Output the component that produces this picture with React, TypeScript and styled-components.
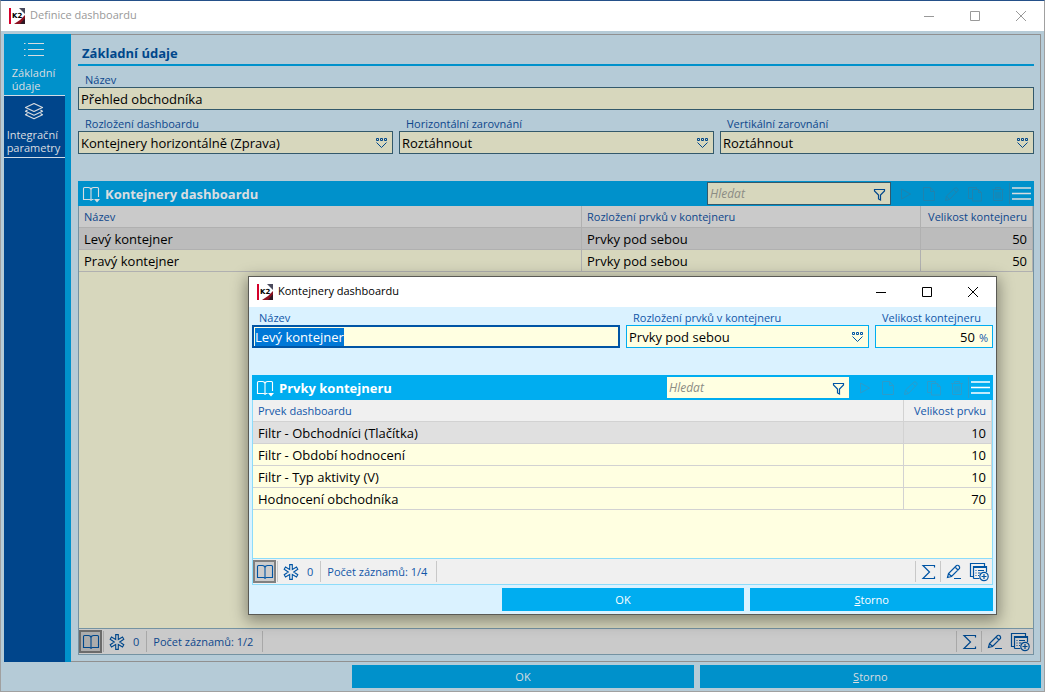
import React, { useEffect, useId, useRef } from 'react';
import styled, { createGlobalStyle, css, ThemeProvider } from 'styled-components';

interface Palette {
  accent: string;
  onAccent: string;
  surface: string;
  text: string;
  label: string;
  icon: string;
  field: string;
  fieldBorder: string;
  gridBorder: string;
  gridLine: string;
  gridHead: string;
  rowActive: string;
  disabledIcon: string;
  separator: string;
  toggle: string;
  toggleBorder: string;
  searchBorder: string;
  caption: string;
  control: string;
}

declare module 'styled-components' {
  export interface DefaultTheme extends Palette {}
}

const activePalette: Palette = {
  accent: '#00adf0',
  onAccent: '#ffffff',
  surface: '#daf2ff',
  text: '#000000',
  label: '#1156a8',
  icon: '#0055a5',
  field: '#ffffe1',
  fieldBorder: '#00adf0',
  gridBorder: '#8cdcfa',
  gridLine: '#d2d2d2',
  gridHead: '#f0f0f0',
  rowActive: '#e0e0e0',
  disabledIcon: '#2a9ccc',
  separator: '#c8c8c8',
  toggle: '#cccccc',
  toggleBorder: '#808080',
  searchBorder: '#00adf0',
  caption: '#000000',
  control: '#000000',
};

const dimmedPalette: Palette = {
  accent: '#0091cb',
  onAccent: '#d9dde0',
  surface: '#b5cbd7',
  text: '#000000',
  label: '#0d478c',
  icon: '#00478b',
  field: '#d7d7bd',
  fieldBorder: '#33596b',
  gridBorder: '#7492a2',
  gridLine: '#b0b0b0',
  gridHead: '#cacaca',
  rowActive: '#bcbcbc',
  disabledIcon: '#1f83ae',
  separator: '#a8a8a8',
  toggle: '#acacac',
  toggleBorder: '#6b6b6b',
  searchBorder: '#33596b',
  caption: '#999999',
  control: '#999999',
};

const GlobalStyle = createGlobalStyle`
  *, *::before, *::after { box-sizing: border-box; }
  body {
    margin: 0;
    font-family: "Open Sans", "Noto Sans", sans-serif;
    font-size: 13px;
    line-height: 17px;
  }
  button, input, select { font: inherit; margin: 0; padding: 0; border: 0; border-radius: 0; }
  button { background: none; cursor: pointer; }
`;

/* ---------- windows ---------- */

const AppWindow = styled.div`
  position: relative;
  display: flex;
  flex-direction: column;
  min-height: 100vh;
  border: 1px solid #a0a0a0;
  border-top-color: #245089;
  background: ${p => p.theme.surface};
`;

const DialogWindow = styled.section`
  position: absolute;
  top: 275px;
  left: 247px;
  right: 47px;
  display: flex;
  flex-direction: column;
  border: 1px solid #5a5a55;
  background: ${p => p.theme.surface};
  box-shadow: 0 4px 14px 2px rgba(0, 0, 0, 0.38);
`;

const TitleBar = styled.header`
  display: flex;
  align-items: center;
  height: 30px;
  padding-left: 8px;
  background: #fff;
`;

const Caption = styled.h1`
  flex: 1;
  margin: 0 0 0 5px;
  padding-bottom: 2px;
  font-size: 11px;
  font-weight: 400;
  line-height: 16px;
  color: ${p => p.theme.caption};
`;

const WindowButton = styled.button`
  display: flex;
  align-items: center;
  justify-content: center;
  width: 46px;
  height: 30px;
  color: ${p => p.theme.control};
`;

const Workspace = styled.div`
  flex: 1;
  display: flex;
  padding: 3px 3px 0;
`;

const Panel = styled.main`
  flex: 1;
  min-width: 0;
  display: flex;
  flex-direction: column;
  padding: 0 6px 6px 7px;
  border: 1px solid #909090;
  border-left: 0;
`;

const DialogBody = styled.div`
  display: flex;
  flex-direction: column;
  padding: 3px 3px 0;
`;

const Actions = styled.footer`
  display: grid;
  grid-template-columns: repeat(3, 1fr);
  gap: 6px;
  padding: 3px 3px 3px 4px;
`;

const ActionButton = styled.button<{ $first?: boolean }>`
  grid-column: ${p => (p.$first ? 2 : 'auto')};
  height: 23px;
  background: ${p => p.theme.accent};
  color: ${p => p.theme.onAccent};
  font-size: 11px;
  line-height: 16px;
`;

/* ---------- side navigation ---------- */

const Sidebar = styled.nav`
  flex: none;
  display: flex;
  flex-direction: column;
  width: 67px;
  padding-right: 6px;
  background: ${p => p.theme.accent};
`;

const SideTab = styled.button<{ $active?: boolean }>`
  display: flex;
  flex-direction: column;
  align-items: center;
  gap: 7px;
  height: 62px;
  padding: 5px 2px 0 0;
  border-bottom: 1px solid #d0dce6;
  background: ${p => (p.$active ? p.theme.accent : '#00458b')};
  color: ${p => p.theme.onAccent};
  font-size: 11px;
  line-height: 13px;
  text-align: left;
`;

const SideFill = styled.div`
  flex: 1;
  background: #00458b;
`;

/* ---------- form ---------- */

const SectionTitle = styled.h2`
  margin: 0;
  padding: 8px 4px 1px;
  border-bottom: 2px solid ${p => p.theme.accent};
  font-size: 13px;
  line-height: 20px;
  color: ${p => p.theme.icon};
`;

const FieldRow = styled.div<{ $columns?: string; $spaced?: boolean }>`
  display: grid;
  grid-template-columns: ${p => p.$columns ?? '1fr'};
  gap: 6px;
  padding-top: ${p => (p.$spaced ? '6px' : '0')};
`;

const FieldBlock = styled.div`
  display: flex;
  flex-direction: column;
  min-width: 0;
`;

const FieldLabel = styled.label`
  padding-left: 7px;
  font-size: 11px;
  line-height: 15px;
  white-space: nowrap;
  color: ${p => p.theme.label};
`;

const FieldBox = styled.div`
  position: relative;
  display: flex;
  align-items: center;
  height: 23px;
  padding: 1px 2px 0;
  border: 1px solid ${p => p.theme.fieldBorder};
  background: ${p => p.theme.field};

  &:has(input:focus) {
    padding: 1px 1px 0;
    border: 2px solid #0055a5;
  }
`;

const control = css`
  flex: 1;
  min-width: 0;
  width: 100%;
  height: 18px;
  background: transparent;
  color: ${p => p.theme.text};
  line-height: 18px;
  outline: none;
`;

const TextInput = styled.input<{ $numeric?: boolean }>`
  ${control}
  text-align: ${p => (p.$numeric ? 'right' : 'left')};

  &::selection {
    background: #0078d7;
    color: #fff;
  }
`;

const Unit = styled.span`
  margin: 0 2px 0 4px;
  font-size: 11px;
  color: ${p => p.theme.label};
`;

const SelectInput = styled.select`
  ${control}
  appearance: none;
`;

const SelectMark = styled.svg`
  position: absolute;
  right: 4px;
  top: 5px;
  pointer-events: none;
  color: ${p => p.theme.icon};
`;

/* ---------- data grid ---------- */

const GridFrame = styled.section`
  flex: 1;
  display: flex;
  flex-direction: column;
  margin-top: 27px;
`;

const GridBar = styled.div`
  display: flex;
  align-items: center;
  height: 25px;
  padding: 0 3px 0 4px;
  background: ${p => p.theme.accent};
  color: ${p => p.theme.onAccent};
`;

const GridTitle = styled.h3`
  flex: 1;
  margin: 0 0 0 5px;
  font-size: 13px;
  line-height: 18px;
`;

const SearchBox = styled.div`
  display: flex;
  align-items: center;
  width: 184px;
  height: 23px;
  margin-right: 3px;
  padding: 1px 4px 0 2px;
  border: 1px solid ${p => p.theme.searchBorder};
  background: ${p => p.theme.field};
  color: ${p => p.theme.icon};
`;

const SearchInput = styled.input`
  ${control}
  font-size: 12px;
  font-style: italic;

  &::placeholder {
    color: #8c8c84;
    opacity: 1;
  }
`;

const BarButton = styled.button`
  display: flex;
  align-items: center;
  justify-content: center;
  width: 23px;
  height: 23px;
  color: ${p => p.theme.disabledIcon};
`;

const MenuButton = styled.button`
  display: flex;
  align-items: center;
  height: 21px;
  padding-left: 2px;
  border-left: 1px solid ${p => p.theme.disabledIcon};
  color: ${p => p.theme.onAccent};
`;

const FilterButton = styled.button`
  display: flex;
  color: inherit;
`;

const GridBody = styled.div<{ $minHeight: string }>`
  flex: 1;
  min-height: ${p => p.$minHeight};
  border: 1px solid ${p => p.theme.gridBorder};
  border-top: 0;
  background: ${p => p.theme.field};
`;

const Table = styled.table`
  width: 100%;
  table-layout: fixed;
  border-collapse: separate;
  border-spacing: 0;
`;

const cell = css`
  height: 22px;
  padding: 0 5px;
  border-right: 1px solid ${p => p.theme.gridLine};
  border-bottom: 1px solid ${p => p.theme.gridLine};
  white-space: nowrap;
`;

const HeadCell = styled.th<{ $width?: string; $numeric?: boolean }>`
  ${cell}
  width: ${p => p.$width ?? 'auto'};
  background: ${p => p.theme.gridHead};
  color: ${p => p.theme.label};
  font-size: 11px;
  font-weight: 400;
  text-align: ${p => (p.$numeric ? 'right' : 'left')};
`;

const DataRow = styled.tr<{ $active?: boolean }>`
  background: ${p => (p.$active ? p.theme.rowActive : p.theme.field)};
`;

const DataCell = styled.td<{ $numeric?: boolean }>`
  ${cell}
  padding-top: 2px;
  color: ${p => p.theme.text};
  text-align: ${p => (p.$numeric ? 'right' : 'left')};
`;

const StatusBar = styled.div`
  display: flex;
  align-items: center;
  height: 26px;
  border: 1px solid ${p => p.theme.gridBorder};
  border-top: 0;
  background: ${p => p.theme.gridHead};
  color: ${p => p.theme.label};
  font-size: 11px;
`;

const ViewToggle = styled.button`
  display: flex;
  align-items: center;
  justify-content: center;
  width: 23px;
  height: 23px;
  margin-right: 1px;
  border: 2px solid ${p => p.theme.toggleBorder};
  background: ${p => p.theme.toggle};
  color: ${p => p.theme.icon};
`;

const StatusItem = styled.div<{ $end?: boolean }>`
  display: flex;
  align-items: center;
  gap: 8px;
  height: 21px;
  padding: ${p => (p.$end ? '0 9px 0 6px' : '0 7px 0 5px')};
  border-left: 1px solid ${p => p.theme.separator};
  border-right: ${p => (p.$end ? `1px solid ${p.theme.separator}` : '0')};
`;

const StatusTools = styled.div`
  display: flex;
  margin-left: auto;
`;

const ToolGroup = styled.div`
  display: flex;
  align-items: center;
  gap: 7px;
  height: 21px;
  padding: 0 3px 0 5px;
  border-left: 1px solid ${p => p.theme.separator};
`;

const ToolButton = styled.button`
  display: flex;
  justify-content: center;
  color: ${p => p.theme.icon};
`;

/* ---------- drawings ---------- */

const line = { fill: 'none', stroke: 'currentColor' } as const;

const Logo = () => (
  <svg width="16" height="16" viewBox="0 0 16 16" aria-hidden="true">
    <rect width="16" height="16" fill="#fff" />
    <rect width="2" height="16" fill="#d4002a" />
    <path d="M10 0h6v6z" fill="#4a4a5c" />
    <path d="M5 16l6-4 5-5v9z" fill="#8c1020" />
    <path d="M11 16l5-6v6z" fill="#2e1824" />
    <text x="3" y="10" fontSize="7" fontWeight="700" fontFamily="DejaVu Sans, sans-serif" fill="#000">K2</text>
  </svg>
);

const MinimizeIcon = () => (
  <svg width="12" height="12" {...line}><path d="M1 6.5h10" /></svg>
);
const MaximizeIcon = () => (
  <svg width="12" height="12" {...line}><path d="M1.5 1.5h9v9h-9z" /></svg>
);
const CloseIcon = () => (
  <svg width="12" height="12" {...line}><path d="M1 1l10 10M11 1L1 11" /></svg>
);
const ListIcon = () => (
  <svg width="20" height="20" {...line}>
    <path d="M4 4.5h16M4 10.5h16M4 16.5h16M0 4.5h1.5M0 10.5h1.5M0 16.5h1.5" />
  </svg>
);
const LayersIcon = () => (
  <svg width="20" height="20" {...line} strokeWidth="1.2" strokeLinejoin="round">
    <path d="M10 2.500l8.500 4-8.500 4-8.500-4zM3.500 9l-2 1.200 8.500 4 8.500-4-2-1.200M3.500 12.500l-2 1.200 8.500 4 8.500-4-2-1.200" />
  </svg>
);
const BookIcon = ({ marker }: { marker?: boolean }) => (
  <svg width="18" height="18" {...line} strokeWidth="1.1">
    <path d="M9 4.5Q8.500 2.500 6.500 2.500H2.500Q1.500 2.500 1.500 3.500V14.500H7.500Q8.500 14.500 9 15.500M9 4.500Q9.500 2.500 11.500 2.500H15.500Q16.500 2.500 16.500 3.500V12M9 4.500V15.500" />
    {marker
      ? <path d="M9 15.500q.5-1 1.500-1h1" />
      : <path d="M16.500 11v3.500h-6q-1 0-1.500 1" />}
    {marker && <path d="M12 14h6L15 17.500z" fill="currentColor" stroke="none" />}
  </svg>
);
const FilterIcon = () => (
  <svg width="13" height="13" {...line} strokeWidth="1.2">
    <path d="M1.500 1.500h10v1.500L7.500 7v5l-2-1V7L1.500 3z" />
  </svg>
);
const PlayIcon = () => (
  <svg width="14" height="16" {...line}><path d="M2.500 3v10l9-5z" /></svg>
);
const PageIcon = () => (
  <svg width="14" height="16" {...line}><path d="M1.500 1.500h7l4 4v9h-11zM8.500 1.500v4h4" /></svg>
);
const PencilIcon = () => (
  <svg width="16" height="16" {...line}>
    <path d="M1.500 14.500l1-4.500 8.500-8q1.500-.7 2.500.5t.5 2L5.500 13.500zM2.500 10l3 3.500M9.500 3.500l3 3" />
  </svg>
);
const CopyIcon = () => (
  <svg width="16" height="16" {...line}>
    <path d="M5.500 12.500H1.500v-11h8V3.500M5.500 3.500h6l3 3v8.500h-9zM11.500 3.500V6.500h3" />
  </svg>
);
const TrashIcon = () => (
  <svg width="14" height="16" {...line}>
    <path d="M1 3.500h12M4.500 3V1.500h5V3M2.500 4v10.500h9V4M5 6v6.500M7 6v6.500M9 6v6.500" />
  </svg>
);
const MenuIcon = () => (
  <svg width="19" height="15" {...line}><path d="M0 2h19M0 7.500h19M0 13h19" strokeWidth="1.300" /></svg>
);
const AsteriskIcon = () => (
  <svg width="16" height="16" {...line} strokeWidth="1.100">
    <path d="M6.700 .6h2.600v4.900L13.500 3l1.300 2.300L10.700 8l4.100 2.700-1.300 2.300-4.200-2.500v4.900H6.700v-4.900L2.500 13l-1.300-2.300L5.300 8 1.200 5.300 2.500 3l4.200 2.500z" />
  </svg>
);
const SumIcon = () => (
  <svg width="16" height="16" {...line} strokeWidth="1.2">
    <path d="M13.500 3.500V1.500H2L8.500 8 2 14.500h11.500v-2" />
  </svg>
);
const EditIcon = () => (
  <svg width="16" height="16" {...line} strokeWidth="1.200">
    <path d="M1.500 13.500l1-4L10.500 1.500q1.500-.7 2.500.5t.5 2.500l-8 8zM2.500 9.500l3 3M9 3l3 3M8 14.500h7" />
  </svg>
);
const AddRecordIcon = () => (
  <svg width="20" height="20" {...line} strokeWidth="1.2">
    <path d="M4 14.500H1.500v-13h14V4M4.500 16.500h6M4.500 16.500v-12h13V10M4.500 5.500h13M6.500 8.500h1M9 8.500h6M6.500 11h1M9 11h2.500M6.500 13.500h1M9 13.500h1" />
    <circle cx="15" cy="14.500" r="4.200" />
    <path d="M15 12v5M12.500 14.500h5" />
  </svg>
);
const DropMark = () => (
  <SelectMark width="13" height="12" {...line} aria-hidden="true">
    <path d="M1.500 1.500h2v2h-2zM5.500 1.500h2v2h-2zM9.500 1.500h2v2h-2zM1.500 5.500l5 5 5-5" />
  </SelectMark>
);

/* ---------- composed parts ---------- */

function WindowTitle({ title }: { title: string }) {
  return (
    <TitleBar>
      <Logo />
      <Caption>{title}</Caption>
      <WindowButton aria-label="Minimalizovat"><MinimizeIcon /></WindowButton>
      <WindowButton aria-label="Maximalizovat"><MaximizeIcon /></WindowButton>
      <WindowButton aria-label="Zavřít"><CloseIcon /></WindowButton>
    </TitleBar>
  );
}

function TextField(props: { label: string; value: string; unit?: string; selected?: boolean }) {
  const id = useId();
  const ref = useRef<HTMLInputElement>(null);
  useEffect(() => {
    if (props.selected) {
      ref.current?.focus();
      ref.current?.select();
    }
  }, [props.selected]);
  return (
    <FieldBlock>
      <FieldLabel htmlFor={id}>{props.label}</FieldLabel>
      <FieldBox>
        <TextInput id={id} ref={ref} defaultValue={props.value} $numeric={!!props.unit} />
        {props.unit && <Unit>{props.unit}</Unit>}
      </FieldBox>
    </FieldBlock>
  );
}

function SelectField({ label, value }: { label: string; value: string }) {
  const id = useId();
  return (
    <FieldBlock>
      <FieldLabel htmlFor={id}>{label}</FieldLabel>
      <FieldBox>
        <SelectInput id={id} defaultValue={value}><option>{value}</option></SelectInput>
        <DropMark />
      </FieldBox>
    </FieldBlock>
  );
}

interface Column {
  title: string;
  width?: string;
  numeric?: boolean;
}

function DataGrid(props: {
  title: string;
  columns: Column[];
  rows: string[][];
  minHeight: string;
}) {
  const { title, columns, rows, minHeight } = props;
  return (
    <GridFrame>
      <GridBar>
        <BookIcon marker />
        <GridTitle>{title}</GridTitle>
        <SearchBox>
          <SearchInput aria-label="Hledat" placeholder="Hledat" />
          <FilterButton aria-label="Filtr"><FilterIcon /></FilterButton>
        </SearchBox>
        <BarButton aria-label="Spustit" disabled><PlayIcon /></BarButton>
        <BarButton aria-label="Nový" disabled><PageIcon /></BarButton>
        <BarButton aria-label="Upravit" disabled><PencilIcon /></BarButton>
        <BarButton aria-label="Kopírovat" disabled><CopyIcon /></BarButton>
        <BarButton aria-label="Smazat" disabled><TrashIcon /></BarButton>
        <MenuButton aria-label="Nabídka"><MenuIcon /></MenuButton>
      </GridBar>
      <GridBody $minHeight={minHeight}>
        <Table>
          <thead>
            <tr>
              {columns.map(c => (
                <HeadCell key={c.title} scope="col" $width={c.width} $numeric={c.numeric}>{c.title}</HeadCell>
              ))}
            </tr>
          </thead>
          <tbody>
            {rows.map((row, i) => (
              <DataRow key={row[0]} $active={i === 0}>
                {row.map((value, j) => (
                  <DataCell key={columns[j].title} $numeric={columns[j].numeric}>{value}</DataCell>
                ))}
              </DataRow>
            ))}
          </tbody>
        </Table>
      </GridBody>
      <StatusBar>
        <ViewToggle aria-label="Kniha"><BookIcon /></ViewToggle>
        <StatusItem><ToolButton aria-label="Označené"><AsteriskIcon /></ToolButton>0</StatusItem>
        <StatusItem $end>Počet záznamů: 1/{rows.length}</StatusItem>
        <StatusTools>
          <ToolGroup><ToolButton aria-label="Součet"><SumIcon /></ToolButton></ToolGroup>
          <ToolGroup>
            <ToolButton aria-label="Upravit záznam"><EditIcon /></ToolButton>
            <ToolButton aria-label="Přidat záznam"><AddRecordIcon /></ToolButton>
          </ToolGroup>
        </StatusTools>
      </StatusBar>
    </GridFrame>
  );
}

function ConfirmButtons() {
  return (
    <Actions>
      <ActionButton $first>OK</ActionButton>
      <ActionButton><u>S</u>torno</ActionButton>
    </Actions>
  );
}

function ContainerDialog() {
  return (
    <ThemeProvider theme={activePalette}>
      <DialogWindow role="dialog" aria-label="Kontejnery dashboardu">
        <WindowTitle title="Kontejnery dashboardu" />
        <DialogBody>
          <FieldRow $columns="368fr 243fr 118fr">
            <TextField label="Název" value="Levý kontejner" selected />
            <SelectField label="Rozložení prvků v kontejneru" value="Prvky pod sebou" />
            <TextField label="Velikost kontejneru" value="50" unit="%" />
          </FieldRow>
          <DataGrid
            title="Prvky kontejneru"
            minHeight="159px"
            columns={[{ title: 'Prvek dashboardu' }, { title: 'Velikost prvku', width: '88px', numeric: true }]}
            rows={[
              ['Filtr - Obchodníci (Tlačítka)', '10'],
              ['Filtr - Období hodnocení', '10'],
              ['Filtr - Typ aktivity (V)', '10'],
              ['Hodnocení obchodníka', '70'],
            ]}
          />
        </DialogBody>
        <ConfirmButtons />
      </DialogWindow>
    </ThemeProvider>
  );
}

export default function App() {
  return (
    <ThemeProvider theme={dimmedPalette}>
      <GlobalStyle />
      <AppWindow>
        <WindowTitle title="Definice dashboardu" />
        <Workspace>
          <Sidebar>
            <SideTab $active><ListIcon /><span>Základní<br />údaje</span></SideTab>
            <SideTab><LayersIcon /><span>Integrační<br />parametry</span></SideTab>
            <SideFill />
          </Sidebar>
          <Panel>
            <SectionTitle>Základní údaje</SectionTitle>
            <FieldRow $spaced><TextField label="Název" value="Přehled obchodníka" /></FieldRow>
            <FieldRow $spaced $columns="315fr 315fr 314fr">
              <SelectField label="Rozložení dashboardu" value="Kontejnery horizontálně (Zprava)" />
              <SelectField label="Horizontální zarovnání" value="Roztáhnout" />
              <SelectField label="Vertikální zarovnání" value="Roztáhnout" />
            </FieldRow>
            <DataGrid
              title="Kontejnery dashboardu"
              minHeight="200px"
              columns={[
                { title: 'Název' },
                { title: 'Rozložení prvků v kontejneru', width: '339px' },
                { title: 'Velikost kontejneru', width: '112px', numeric: true },
              ]}
              rows={[
                ['Levý kontejner', 'Prvky pod sebou', '50'],
                ['Pravý kontejner', 'Prvky pod sebou', '50'],
              ]}
            />
          </Panel>
        </Workspace>
        <ConfirmButtons />
        <ContainerDialog />
      </AppWindow>
    </ThemeProvider>
  );
}
